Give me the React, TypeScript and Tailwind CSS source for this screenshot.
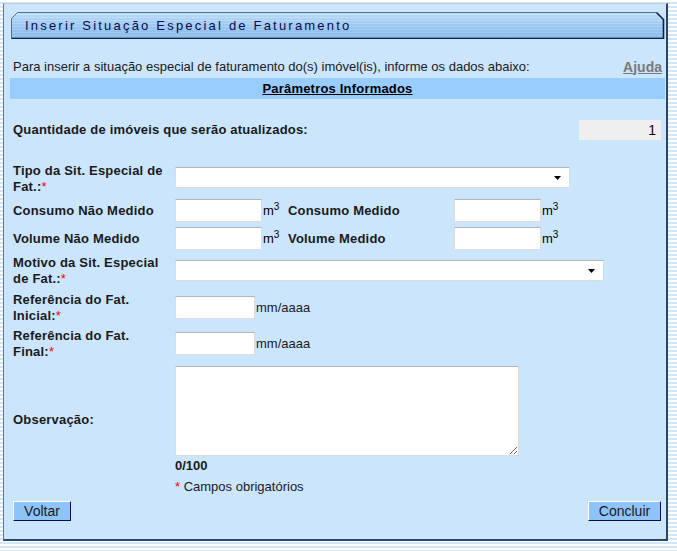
import React from 'react';

const Req: React.FC = () => <span className="text-[#ff0000] font-normal">*</span>;

const M3: React.FC = () => (
  <span className="text-[13px] text-black ml-[1px] leading-none">
    m<sup className="text-[10px]">3</sup>
  </span>
);

const Select: React.FC<{ w: string }> = ({ w }) => (
  <div className={`${w} h-[21px] bg-white border border-[#dcdcdc] border-t-[#b4b4b4] flex items-center justify-end pr-[8px]`}>
    <svg width="7" height="4" viewBox="0 0 7 4">
      <path d="M0 0H7L3.5 4Z" fill="#000" />
    </svg>
  </div>
);

const Input: React.FC<{ w: string; h?: string }> = ({ w, h = 'h-[23px]' }) => (
  <input className={`${w} ${h} bg-white border border-[#dcdcdc] border-t-[#b4b4b4] outline-none`} />
);

const Label: React.FC<{ children: React.ReactNode; w?: string }> = ({ children, w = 'w-[162px]' }) => (
  <div className={`${w} shrink-0 pl-[3px] font-bold text-[13px] tracking-[0.2px] leading-[16px] text-[#1a1a1a]`}>{children}</div>
);

const TitleBar: React.FC = () => (
  <div className="relative h-[28px] ml-[7px] mr-[1px] mt-[7px]">
    <svg className="absolute inset-0" width="654" height="28" viewBox="0 0 654 28">
      <defs>
        <pattern id="stripes" width="4" height="3" patternUnits="userSpaceOnUse">
          <rect width="4" height="3" fill="#99c9f4" />
          <rect width="4" height="1" fill="#b2d7f9" />
        </pattern>
        <linearGradient id="shade" x1="0" y1="0" x2="0" y2="1">
          <stop offset="0" stopColor="#ffffff" stopOpacity="0.35" />
          <stop offset="1" stopColor="#4d8fd1" stopOpacity="0.25" />
        </linearGradient>
      </defs>
      <path d="M0.5 27.5V7.5L6.5 1.5H645.5L652.5 8.5V27.5Z" fill="url(#stripes)" />
      <path d="M0.5 27.5V7.5L6.5 1.5H645.5L652.5 8.5V27.5Z" fill="url(#shade)" />
      <path d="M0.5 27.5V7.5L6.5 1.5H645.5" fill="none" stroke="#56708c" strokeWidth="1" />
      <path d="M645.5 1.5L652.5 8.5V27.5H0.5" fill="none" stroke="#0e2036" strokeWidth="1.6" />
    </svg>
    <div className="relative h-full flex items-center pl-[14px] pt-[2px] text-[13px] tracking-[2.2px] text-[#0a0a4a]">
      Inserir Situação Especial de Faturamento
    </div>
  </div>
);

const btn =
  'h-[20px] bg-[#8fc4fb] border border-t-white border-l-white border-r-[#0a0a50] border-b-[#0a0a50] text-[14px] text-[#1a1a1a] leading-none';

const App: React.FC = () => {
  return (
    <div
      className="w-[677px] h-[551px] pt-[3px] pl-[3px] bg-[repeating-linear-gradient(180deg,#ffffff_0px,#ffffff_2px,#cfe6fb_2px,#cfe6fb_4px)]"
      style={{ fontFamily: '"Liberation Sans", Arial, sans-serif' }}
    >
      <div className="w-[665px] h-[538px] bg-[#cbe5fd] border-l border-l-[#5c7896] border-t border-t-[#c0c8d0] border-r-2 border-r-[#29466a] border-b-2 border-b-[#29466a]">
        <TitleBar />

        <div className="ml-[6px] w-[655px] text-[13px] text-[#1a1a1a]">
          {/* intro */}
          <div className="mt-[20px] h-[16px] flex items-center justify-between pl-[3px] pr-[3px]">
            <span>Para inserir a situação especial de faturamento do(s) imóvel(is), informe os dados abaixo:</span>
            <span className="font-bold underline text-[14px] text-[#7a7a7a]">Ajuda</span>
          </div>

          <div className="mt-[3px] h-[21px] bg-[#99ccff] flex items-center justify-center font-bold underline tracking-[0.2px] text-black">
            Parâmetros Informados
          </div>

          {/* quantidade */}
          <div className="mt-[21px] h-[20px] flex items-center justify-between">
            <Label w="w-auto">Quantidade de imóveis que serão atualizados:</Label>
            <div className="w-[82px] h-[20px] mr-[4px] bg-[#efefef] flex items-center justify-end pr-[5px] text-[14px] text-[#200000]">
              1
            </div>
          </div>

          {/* tipo */}
          <div className="mt-[23px] flex items-start">
            <Label>
              Tipo da Sit. Especial de
              <br />
              Fat.:<Req />
            </Label>
            <div className="mt-[4px] ml-[3px]">
              <Select w="w-[395px]" />
            </div>
          </div>

          {/* consumo */}
          <div className="mt-[4px] h-[23px] flex items-center">
            <Label>Consumo Não Medido</Label>
            <div className="ml-[3px] w-[113px] flex items-center">
              <Input w="w-[87px]" />
              <M3 />
            </div>
            <div className="w-[166px] font-bold tracking-[0.2px] leading-[16px]">Consumo Medido</div>
            <div className="flex items-center">
              <Input w="w-[87px]" />
              <M3 />
            </div>
          </div>

          {/* volume */}
          <div className="mt-[5px] h-[23px] flex items-center">
            <Label>Volume Não Medido</Label>
            <div className="ml-[3px] w-[113px] flex items-center">
              <Input w="w-[87px]" />
              <M3 />
            </div>
            <div className="w-[166px] font-bold tracking-[0.2px] leading-[16px]">Volume Medido</div>
            <div className="flex items-center">
              <Input w="w-[87px]" />
              <M3 />
            </div>
          </div>

          {/* motivo */}
          <div className="mt-[5px] flex items-start">
            <Label>
              Motivo da Sit. Especial
              <br />
              de Fat.:<Req />
            </Label>
            <div className="mt-[5px] ml-[3px]">
              <Select w="w-[429px]" />
            </div>
          </div>

          {/* ref inicial */}
          <div className="mt-[5px] flex items-start">
            <Label>
              Referência do Fat.
              <br />
              Inicial:<Req />
            </Label>
            <div className="mt-[4px] ml-[3px] flex items-center">
              <Input w="w-[80px]" />
              <span className="ml-[1px]">mm/aaaa</span>
            </div>
          </div>

          {/* ref final */}
          <div className="mt-[4px] flex items-start">
            <Label>
              Referência do Fat.
              <br />
              Final:<Req />
            </Label>
            <div className="mt-[4px] ml-[3px] flex items-center">
              <Input w="w-[80px]" />
              <span className="ml-[1px]">mm/aaaa</span>
            </div>
          </div>

          {/* observacao */}
          <div className="mt-[6px] flex items-center">
            <Label>Observação:</Label>
            <div className="ml-[3px] flex flex-col">
              <textarea className="w-[344px] h-[90px] bg-white border border-[#dcdcdc] border-t-[#b4b4b4] outline-none resize" />
              <div className="mt-[3px] h-[14px] leading-[14px] font-bold">0/100</div>
            </div>
          </div>

          <div className="mt-[7px] ml-[165px] h-[14px] leading-[14px]">
            <Req /> Campos obrigatórios
          </div>

          {/* buttons */}
          <div className="mt-[7px] flex justify-between pl-[3px] pr-[4px]">
            <button className={`w-[58px] ${btn}`}>Voltar</button>
            <button className={`w-[73px] ${btn}`}>Concluir</button>
          </div>
        </div>
      </div>
    </div>
  );
};

export default App;
